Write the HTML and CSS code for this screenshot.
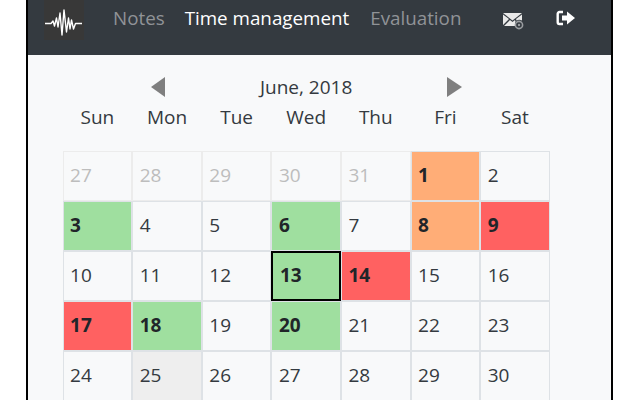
FILE: index.html
```html
<!DOCTYPE html>
<html lang="en">
<head>
    <meta charset="UTF-8">
    <meta name="viewport" content="width=device-width, initial-scale=1.0">
    <title>Time management</title>
    <link rel="stylesheet" href="styles.css">
</head>
<body>
    <div class="app">
        <nav class="navbar">
            <div class="logo">
                <svg width="40" height="40" viewBox="0 0 40 40">
                    <path d="M1 23.5H7L9 21L10.500 26L12.500 18L14 27L16 13L18 35L20 10L22.500 32L24.500 18L26 29L27.500 20L29.500 29L31.500 23.500H38" fill="none" stroke="#fff" stroke-width="1.400" stroke-linejoin="round"/>
                </svg>
            </div>
            <a class="nav-link">Notes</a>
            <a class="nav-link active">Time management</a>
            <a class="nav-link">Evaluation</a>
            <div class="nav-icons">
                <svg class="mail-icon" width="22" height="20" viewBox="0 0 22 20">
                    <path d="M1 3H20L10.500 10.500Z" fill="#e9e9e9"/>
                    <path d="M1 4.500V15L7 9ZM20 4.500V10.500A5.500 5.500 0 0 0 14.500 10.500L14 9ZM2 16H13.500A6 6 0 0 1 13.500 11.500L13 10L10.500 12L8 10Z" fill="#e9e9e9"/>
                    <circle cx="17" cy="15" r="3.600" fill="none" stroke="#9a9da0" stroke-width="1.600"/>
                    <circle cx="17" cy="15" r="1.200" fill="#9a9da0"/>
                </svg>
                <svg width="20" height="16" viewBox="0 0 20 16">
                    <path d="M7 2H3.500A1.800 1.800 0 0 0 1.700 3.800V12.200A1.800 1.800 0 0 0 3.500 14H7" fill="none" stroke="#fff" stroke-width="2.400"/>
                    <path d="M6 5.500H11V1.500L19 8L11 14.500V10.500H6Z" fill="#fff"/>
                </svg>
            </div>
        </nav>
        <main class="calendar">
            <div class="month-row">
                <span class="arrow arrow-left"></span>
                <span class="month">June, 2018</span>
                <span class="arrow arrow-right"></span>
            </div>
            <div class="weekdays">
                <span>Sun</span><span>Mon</span><span>Tue</span><span>Wed</span><span>Thu</span><span>Fri</span><span>Sat</span>
            </div>
            <div class="days">
                <div class="day muted">27</div>
                <div class="day muted">28</div>
                <div class="day muted">29</div>
                <div class="day muted">30</div>
                <div class="day muted">31</div>
                <div class="day orange">1</div>
                <div class="day">2</div>

                <div class="day green">3</div>
                <div class="day">4</div>
                <div class="day">5</div>
                <div class="day green">6</div>
                <div class="day">7</div>
                <div class="day orange">8</div>
                <div class="day red">9</div>

                <div class="day">10</div>
                <div class="day">11</div>
                <div class="day">12</div>
                <div class="day green today">13</div>
                <div class="day red">14</div>
                <div class="day">15</div>
                <div class="day">16</div>

                <div class="day red">17</div>
                <div class="day green">18</div>
                <div class="day">19</div>
                <div class="day green">20</div>
                <div class="day">21</div>
                <div class="day">22</div>
                <div class="day">23</div>

                <div class="day">24</div>
                <div class="day grey">25</div>
                <div class="day">26</div>
                <div class="day">27</div>
                <div class="day">28</div>
                <div class="day">29</div>
                <div class="day">30</div>
            </div>
        </main>
    </div>
</body>
</html>
```
FILE: styles.css
```css
html, body {
    height: 400px;
    margin: 0;
    padding: 0;
    overflow: hidden;
    background-color: #fff;
}
body {
    font-family: "Open Sans", Arial, sans-serif;
    color: #343a40;
}
.app {
    width: 583px;
    height: 400px;
    margin-left: 26px;
    border-left: 2px solid #000;
    border-right: 2px solid #000;
    background-color: #f8f9fa;
    overflow: hidden;
}
.navbar {
    display: flex;
    align-items: flex-start;
    height: 55px;
    background-color: #343a40;
}
.logo {
    width: 40px;
    height: 40px;
    margin-left: 16px;
    background-color: #383838;
}
.nav-link {
    margin-top: 5px;
    font-size: 18.800px;
    line-height: 27px;
    color: #909397;
}
.logo + .nav-link {
    margin-left: 29px;
}
.nav-link.active {
    margin-left: 20px;
    color: #fff;
}
.nav-link.active + .nav-link {
    margin-left: 21px;
}
.nav-icons {
    display: flex;
    align-items: flex-start;
    gap: 32px;
    margin-left: auto;
    margin-right: 35px;
    margin-top: 10px;
}
.calendar {
    padding: 18px 0 0 34.600px;
}
.month-row {
    display: flex;
    justify-content: center;
    align-items: center;
    gap: 95px;
    width: 488px;
    height: 27px;
    font-size: 19px;
}
.arrow {
    width: 0;
    height: 0;
    border-top: 10px solid transparent;
    border-bottom: 10px solid transparent;
}
.arrow-left {
    border-right: 14px solid #7f7f7f;
}
.arrow-right {
    border-left: 15px solid #7f7f7f;
}
.weekdays {
    display: grid;
    grid-template-columns: repeat(7, 69.600px);
    height: 51px;
    padding-top: 5px;
    box-sizing: border-box;
    text-align: center;
    font-size: 19px;
    line-height: 24px;
}
.days {
    display: grid;
    grid-template-columns: repeat(7, 69.600px);
    grid-auto-rows: 50px;
    width: 488px;
}
.day {
    box-sizing: border-box;
    display: flex;
    align-items: center;
    padding: 0 0 2px 6.500px;
    border: 1px solid #dee2e6;
    font-size: 19px;
}
.muted {
    color: #bdbdbd;
    border-color: #ececec;
}
.green, .orange, .red {
    font-weight: 700;
    color: #212529;
}
.green {
    background-color: #9fdf9f;
}
.orange {
    background-color: #ffad77;
}
.red {
    background-color: #ff6161;
}
.grey {
    background-color: #eeeeee;
}
.today {
    border: 2px solid #000;
    padding-left: 6.500px;
}
```
